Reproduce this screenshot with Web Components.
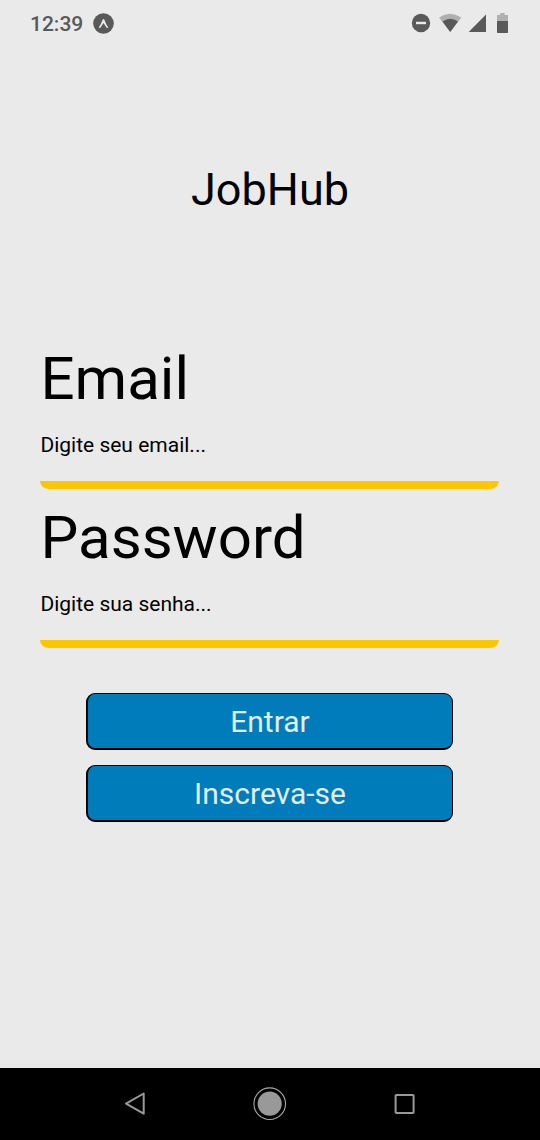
<!DOCTYPE html>
<html lang="pt-BR">
<head>
<meta charset="utf-8">
<title>JobHub</title>
<style>
html, body { margin: 0; height: 100%; background: #eaeaea; }
body { font-family: Roboto, "Noto Sans", sans-serif; color: #000; overflow: hidden; }
</style>
</head>
<body>
<job-app></job-app>
<script>
const define = (name, html) => {
  const tpl = document.createElement('template');
  tpl.innerHTML = html;
  customElements.define(name, class extends HTMLElement {
    constructor() {
      super();
      this.attachShadow({ mode: 'open' }).append(tpl.content.cloneNode(true));
    }
  });
};

define('status-bar', `
<style>
:host { display: flex; align-items: center; justify-content: space-between; height: 48px; box-sizing: border-box; padding: 0 31px 2px 30px; color: #595959; }
.left { display: flex; align-items: center; gap: 10px; font-size: 21px; font-weight: 500; line-height: 24px; }
.left span { padding-top: 2px; }
.right { display: flex; align-items: center; }
svg { display: block; }
</style>
<div class="left"><span>12:39</span>
<svg width="21" height="21" viewBox="0 0 21 21"><circle cx="10.5" cy="10.5" r="10.3" fill="#595959"/><path d="M5.8 14.2C7.2 12.8 8.6 9.2 9.6 6.7Q10.5 5.2 11.4 6.7C12.4 9.2 13.8 12.8 15.2 14.2Q14.2 15.6 13.2 14.3L10.5 10 7.8 14.3Q6.8 15.6 5.8 14.2Z" fill="#eaeaea"/></svg></div>
<div class="right">
<svg width="98" height="22" viewBox="411 12 98 22">
<circle cx="421" cy="23" r="9.2" fill="#595959"/><rect x="416" y="21.8" width="10" height="2.4" fill="#eaeaea"/>
<path d="M439 17.5Q450 10.2 461.3 17.5L450.2 32Z" fill="#b0b0b0"/><path d="M442.5 21.6Q450.2 15.8 458 21.6L450.2 32Z" fill="#595959"/>
<path d="M486 14.5V32H468.7Z" fill="#595959"/>
<path d="M497 15h3.2v-2h4.4v2h3.4v6.5h-11Z" fill="#b0b0b0"/><path d="M497 21h11v11.3a.7.7 0 0 1-.7.7h-9.6a.7.7 0 0 1-.7-.7Z" fill="#595959"/>
</svg></div>`);

define('form-field', `
<style>
:host { display: block; height: 159px; }
.label { padding-left: .5px; font-size: 60px; line-height: 70px; }
.input { height: 67px; box-sizing: border-box; padding: 19px 0 0 .4px; font-size: 21px; line-height: 25px; }
.line { height: 8px; background: #ffc600; border-radius: 0 0 9px 9px / 0 0 8px 8px; }
</style>
<div class="label"><slot name="label"></slot></div>
<div class="input"><slot></slot></div>
<div class="line"></div>`);

define('action-button', `
<style>
:host { display: flex; justify-content: center; box-sizing: border-box; height: 57px; padding-top: 10px; border: solid #000; border-width: 1px 1px 2px 2px; border-radius: 9px; background: #007cba; color: #e0edf5; font-size: 30px; line-height: 35px; }
</style>
<slot></slot>`);

define('nav-bar', `
<style>
:host { display: flex; align-items: center; justify-content: space-between; height: 72px; box-sizing: border-box; padding: 0 119px 0 118px; background: #000; }
svg { display: block; }
</style>
<svg width="34" height="34" viewBox="118 1087 34 34"><path d="M143.7 1093.5V1113.7L126 1103.6Z" fill="none" stroke="#999" stroke-width="2" stroke-linejoin="round"/></svg>
<svg width="34" height="34" viewBox="0 0 34 34"><circle cx="16.7" cy="16.7" r="15.8" fill="none" stroke="#aaa" stroke-width="1.1"/><circle cx="16.7" cy="16.7" r="12.1" fill="#999"/></svg>
<svg width="34" height="34" viewBox="387 1087 34 34"><rect x="395.6" y="1094.9" width="18" height="18" rx=".7" fill="none" stroke="#999" stroke-width="2"/></svg>`);

define('job-app', `
<style>
:host { display: flex; flex-direction: column; width: 540px; height: 1140px; background: #eaeaea; }
main { flex: 1; display: flex; flex-direction: column; }
h1 { margin: 115px 0 0; font-size: 45px; font-weight: 400; line-height: 53px; text-align: center; }
.fields { margin: 128px 41px 0 40px; }
.actions { display: flex; flex-direction: column; gap: 15px; margin: 31px 87px 0 86px; }
</style>
<status-bar></status-bar>
<main>
<h1>JobHub</h1>
<div class="fields">
<form-field><span slot="label">Email</span>Digite seu email...</form-field>
<form-field><span slot="label">Password</span>Digite sua senha...</form-field>
</div>
<div class="actions">
<action-button>Entrar</action-button>
<action-button>Inscreva-se</action-button>
</div>
</main>
<nav-bar></nav-bar>`);
</script>
</body>
</html>
